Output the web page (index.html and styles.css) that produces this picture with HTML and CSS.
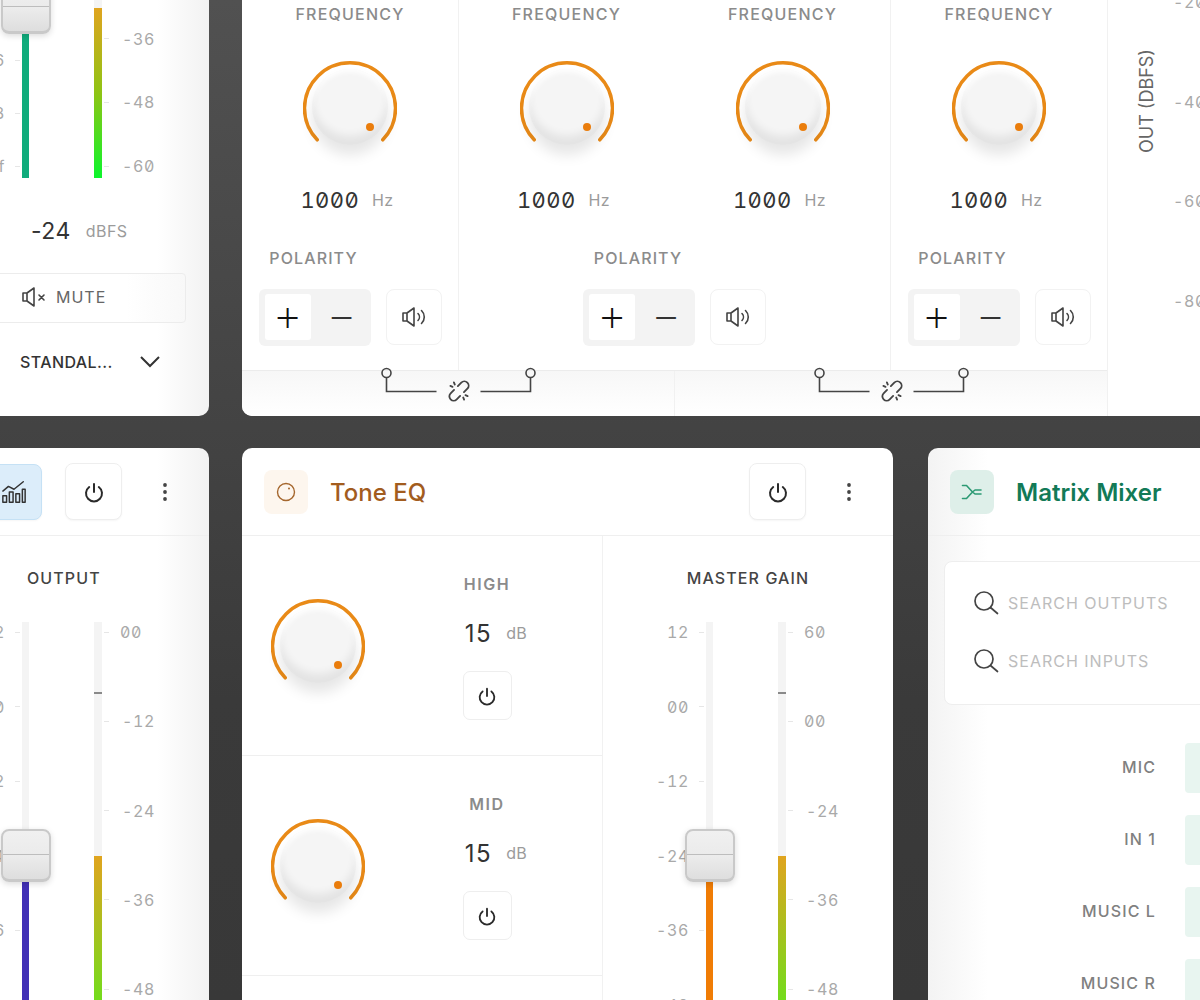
FILE: index.html
```html
<!DOCTYPE html>
<html>
  <head>
    <meta charset="utf-8">
    <title>Audio Processor</title>
    <link rel="stylesheet" href="styles.css">
  </head>
  <body>
    <svg class="sprites" width="0" height="0">
      <symbol id="i-power" viewBox="0 0 24 24"><path d="M12 4v8M7.2 7a8 8 0 1 0 9.6 0" fill="none" stroke="currentColor" stroke-width="2" stroke-linecap="round"/></symbol>
      <symbol id="i-dots" viewBox="0 0 24 24"><circle cx="12" cy="5" r="1.9" fill="currentColor"/><circle cx="12" cy="12" r="1.9" fill="currentColor"/><circle cx="12" cy="19" r="1.9" fill="currentColor"/></symbol>
      <symbol id="i-speaker" viewBox="0 0 26 24"><g fill="none" stroke="currentColor" stroke-width="1.6" stroke-linejoin="round" stroke-linecap="round"><path d="M2 8h4l7-5v18l-7-5H2zM6 8v8"/><path d="M17 8.5a5 5 0 0 1 0 7M20.5 5.5a9 9 0 0 1 0 13"/></g></symbol>
      <symbol id="i-mute" viewBox="0 0 26 24"><g fill="none" stroke="currentColor" stroke-width="1.6" stroke-linejoin="round" stroke-linecap="round"><path d="M2 8h4l7-5v18l-7-5H2zM6 8v8"/><path d="M18 10l5 5M23 10l-5 5"/></g></symbol>
      <symbol id="i-search" viewBox="0 0 26 26"><g fill="none" stroke="currentColor" stroke-width="1.7" stroke-linecap="round"><circle cx="11" cy="11" r="9"/><path d="M17.5 17.5l7 6"/></g></symbol>
      <symbol id="i-link" viewBox="0 0 26 26"><g transform="rotate(-45 13 13)" fill="none" stroke="currentColor" stroke-width="1.7" stroke-linecap="round" stroke-linejoin="round"><path d="M10.5 9H6a4 4 0 0 0 0 8h4.5"/><path d="M15.5 9H20a4 4 0 0 1 0 8h-4.5"/><path d="M11.5 6l-.8-2M14.5 6l.8-2M11.5 20l-.8 2M14.500 20l.8 2"/></g></symbol>
      <symbol id="i-connector" viewBox="0 0 155 30"><g fill="none" stroke="currentColor" stroke-width="1.6"><circle cx="5.5" cy="6" r="4.5"/><path d="M5.5 10.5v14h50M99.5 24.5h50v-14"/><circle cx="149.5" cy="6" r="4.5"/></g></symbol>
      <symbol id="i-knob-arc" viewBox="0 0 94 94"><path d="M14.2 79.8a45.5 45.5 0 1 1 65.6 0" fill="none" stroke="#e98a17" stroke-width="3.5" stroke-linecap="round"/></symbol>
      <symbol id="i-chart" viewBox="0 0 28 28"><g fill="none" stroke="currentColor" stroke-width="1.6" stroke-linejoin="round" stroke-linecap="round"><path d="M2 13l6-5 6 3 10-8"/><rect x="2" y="18" width="4" height="7"/><rect x="9" y="14" width="4" height="11"/><rect x="16" y="16" width="4" height="9"/><rect x="23" y="11" width="3" height="14"/></g></symbol>
    </svg>

    <div class="stage">
      <div class="row row-top">
        <section class="card card-side">
          <div class="fader-row fader-row-short">
            <div class="scale scale-left">
              <div class="scale-item"><span>-36</span><i></i></div>
              <div class="scale-item"><span>-48</span><i></i></div>
              <div class="scale-item"><span>-Inf</span><i></i></div>
            </div>
            <div class="track">
              <div class="fill fill-teal" style="height:144px"></div>
              <div class="fader-knob" style="bottom:144px"></div>
            </div>
            <div class="track track-meter">
              <div class="fill fill-meter-full" style="height:170px"></div>
            </div>
            <div class="scale scale-right">
              <div class="scale-item"><i></i><span>-36</span></div>
              <div class="scale-item"><i></i><span>-48</span></div>
              <div class="scale-item"><i></i><span>-60</span></div>
            </div>
          </div>
          <div class="readout"><span class="readout-num">-24</span><span class="unit">dBFS</span></div>
          <button class="mute"><svg class="icon-mute"><use href="#i-mute"/></svg>MUTE</button>
          <div class="select">
            <span>STANDAL...</span>
            <svg class="chevron" viewBox="0 0 22 14"><path d="M2 2l9 9 9-9" fill="none" stroke="currentColor" stroke-width="2"/></svg>
          </div>
        </section>

        <section class="card card-main">
          <div class="eq-area">
            <div class="eq-sections">
              <div class="eq-section">
                <div class="freqs">
                  <div class="freq">
                    <div class="label">FREQUENCY</div>
                    <div class="knob"><svg class="knob-arc"><use href="#i-knob-arc"/></svg><div class="knob-face"></div><div class="knob-dot"></div></div>
                    <div class="value"><span class="value-num">1000</span><span class="unit">Hz</span></div>
                  </div>
                </div>
                <div class="polarity-label">POLARITY</div>
                <div class="polarity">
                  <div class="segment"><button class="seg-btn seg-on">+</button><button class="seg-btn">&minus;</button></div>
                  <button class="icon-btn"><svg class="icon-speaker"><use href="#i-speaker"/></svg></button>
                </div>
              </div>
              <div class="eq-section eq-section-wide">
                <div class="freqs">
                  <div class="freq">
                    <div class="label">FREQUENCY</div>
                    <div class="knob"><svg class="knob-arc"><use href="#i-knob-arc"/></svg><div class="knob-face"></div><div class="knob-dot"></div></div>
                    <div class="value"><span class="value-num">1000</span><span class="unit">Hz</span></div>
                  </div>
                  <div class="freq">
                    <div class="label">FREQUENCY</div>
                    <div class="knob"><svg class="knob-arc"><use href="#i-knob-arc"/></svg><div class="knob-face"></div><div class="knob-dot"></div></div>
                    <div class="value"><span class="value-num">1000</span><span class="unit">Hz</span></div>
                  </div>
                </div>
                <div class="polarity-label">POLARITY</div>
                <div class="polarity">
                  <div class="segment"><button class="seg-btn seg-on">+</button><button class="seg-btn">&minus;</button></div>
                  <button class="icon-btn"><svg class="icon-speaker"><use href="#i-speaker"/></svg></button>
                </div>
              </div>
              <div class="eq-section eq-section-last">
                <div class="freqs">
                  <div class="freq">
                    <div class="label">FREQUENCY</div>
                    <div class="knob"><svg class="knob-arc"><use href="#i-knob-arc"/></svg><div class="knob-face"></div><div class="knob-dot"></div></div>
                    <div class="value"><span class="value-num">1000</span><span class="unit">Hz</span></div>
                  </div>
                </div>
                <div class="polarity-label">POLARITY</div>
                <div class="polarity">
                  <div class="segment"><button class="seg-btn seg-on">+</button><button class="seg-btn">&minus;</button></div>
                  <button class="icon-btn"><svg class="icon-speaker"><use href="#i-speaker"/></svg></button>
                </div>
              </div>
            </div>
            <div class="link-strip">
              <div class="link-cell"><svg class="connector"><use href="#i-connector"/></svg><svg class="icon-link"><use href="#i-link"/></svg></div>
              <div class="link-cell"><svg class="connector"><use href="#i-connector"/></svg><svg class="icon-link"><use href="#i-link"/></svg></div>
            </div>
          </div>
          <div class="out-axis">
            <div class="out-title">OUT (DBFS)</div>
            <div class="out-scale">
              <span>-20</span>
              <span>-40</span>
              <span>-60</span>
              <span>-80</span>
            </div>
          </div>
        </section>
      </div>

      <div class="row row-bottom">
        <section class="card card-side">
          <header class="card-head">
            <div class="head-actions">
              <button class="head-btn head-btn-active"><svg class="icon-chart"><use href="#i-chart"/></svg></button>
              <button class="head-btn"><svg class="icon-power"><use href="#i-power"/></svg></button>
              <svg class="icon-dots"><use href="#i-dots"/></svg>
            </div>
          </header>
          <div class="section-title section-title-output">OUTPUT</div>
          <div class="fader-row">
            <div class="scale scale-left scale-wide">
              <div class="scale-item"><span>12</span><i></i></div>
              <div class="scale-item"><span>00</span><i></i></div>
              <div class="scale-item"><span>-12</span><i></i></div>
              <div class="scale-item"><span>-24</span><i></i></div>
              <div class="scale-item"><span>-36</span><i></i></div>
            </div>
            <div class="track">
              <div class="fill fill-indigo" style="height:140px"></div>
              <div class="fader-knob" style="bottom:140px"></div>
            </div>
            <div class="track track-meter">
              <div class="peak"></div>
              <div class="fill fill-meter" style="height:166px"></div>
            </div>
            <div class="scale scale-right scale-wide">
              <div class="scale-item"><i></i><span class="pos">00</span></div>
              <div class="scale-item"><i></i><span>-12</span></div>
              <div class="scale-item"><i></i><span>-24</span></div>
              <div class="scale-item"><i></i><span>-36</span></div>
              <div class="scale-item"><i></i><span>-48</span></div>
            </div>
          </div>
        </section>

        <section class="card card-tone">
          <header class="card-head">
            <div class="badge badge-tone">
              <svg class="icon-dial" viewBox="0 0 20 20"><circle cx="10" cy="10" r="8.5" fill="none" stroke="currentColor" stroke-width="1.4"/><circle cx="13" cy="6.5" r="1" fill="currentColor"/></svg>
            </div>
            <h2 class="card-title title-tone">Tone EQ</h2>
            <div class="head-actions">
              <button class="head-btn"><svg class="icon-power"><use href="#i-power"/></svg></button>
              <svg class="icon-dots"><use href="#i-dots"/></svg>
            </div>
          </header>
          <div class="tone-body">
            <div class="bands">
              <div class="band">
                <div class="knob"><svg class="knob-arc"><use href="#i-knob-arc"/></svg><div class="knob-face"></div><div class="knob-dot"></div></div>
                <div class="band-info">
                  <div class="label label-dark">HIGH</div>
                  <div class="band-value"><span class="band-num">15</span><span class="unit">dB</span></div>
                  <button class="power-small"><svg class="icon-power-small"><use href="#i-power"/></svg></button>
                </div>
              </div>
              <div class="band">
                <div class="knob"><svg class="knob-arc"><use href="#i-knob-arc"/></svg><div class="knob-face"></div><div class="knob-dot"></div></div>
                <div class="band-info">
                  <div class="label label-dark">MID</div>
                  <div class="band-value"><span class="band-num">15</span><span class="unit">dB</span></div>
                  <button class="power-small"><svg class="icon-power-small"><use href="#i-power"/></svg></button>
                </div>
              </div>
            </div>
            <div class="master">
              <div class="section-title">MASTER GAIN</div>
              <div class="fader-row fader-row-master">
                <div class="scale scale-left scale-wide">
                  <div class="scale-item"><span>12</span><i></i></div>
                  <div class="scale-item"><span>00</span><i></i></div>
                  <div class="scale-item"><span>-12</span><i></i></div>
                  <div class="scale-item"><span>-24</span><i></i></div>
                  <div class="scale-item"><span>-36</span><i></i></div>
                  <div class="scale-item"><span>-48</span><i></i></div>
                </div>
                <div class="track">
                  <div class="fill fill-orange" style="height:140px"></div>
                  <div class="fader-knob" style="bottom:140px"></div>
                </div>
                <div class="track track-meter">
                  <div class="peak"></div>
                  <div class="fill fill-meter" style="height:166px"></div>
                </div>
                <div class="scale scale-right scale-wide">
                  <div class="scale-item"><i></i><span class="pos">60</span></div>
                  <div class="scale-item"><i></i><span class="pos">00</span></div>
                  <div class="scale-item"><i></i><span>-24</span></div>
                  <div class="scale-item"><i></i><span>-36</span></div>
                  <div class="scale-item"><i></i><span>-48</span></div>
                </div>
              </div>
            </div>
          </div>
        </section>

        <section class="card card-matrix">
          <header class="card-head">
            <div class="badge badge-matrix">
              <svg class="icon-merge" viewBox="0 0 22 16"><path d="M1.500 1.500h4l6 6.500-6 6.500h-4M11.500 8l2.500-2h6M11.500 8l2.500 2h6" fill="none" stroke="currentColor" stroke-width="1.600" stroke-linejoin="round" stroke-linecap="round"/></svg>
            </div>
            <h2 class="card-title title-matrix">Matrix Mixer</h2>
          </header>
          <div class="search-box">
            <div class="search-row"><svg class="icon-search"><use href="#i-search"/></svg><span>SEARCH OUTPUTS</span></div>
            <div class="search-row"><svg class="icon-search"><use href="#i-search"/></svg><span>SEARCH INPUTS</span></div>
          </div>
          <div class="matrix-rows">
            <div class="matrix-row"><div class="matrix-label">MIC</div><div class="matrix-cell"></div></div>
            <div class="matrix-row"><div class="matrix-label">IN 1</div><div class="matrix-cell"></div></div>
            <div class="matrix-row"><div class="matrix-label">MUSIC L</div><div class="matrix-cell"></div></div>
            <div class="matrix-row"><div class="matrix-label">MUSIC R</div><div class="matrix-cell"></div></div>
          </div>
        </section>
      </div>
    </div>
  </body>
</html>
```

FILE: styles.css
```css
* {
  box-sizing: border-box;
}
html, body {
  margin: 0;
  padding: 0;
}
body {
  font-family: Inter, "Liberation Sans", sans-serif;
  color: #333333;
  overflow: hidden;
}
button {
  font-family: inherit;
  padding: 0;
  cursor: pointer;
}
.sprites {
  position: absolute;
}
.stage {
  width: 1200px;
  height: 1000px;
  overflow: hidden;
  display: flex;
  flex-direction: column;
  gap: 32px;
  background: linear-gradient(to bottom, #515151, #3a3a3a 70%, #383838);
}
.row {
  display: flex;
}
.row-top {
  height: 416px;
  flex: none;
  gap: 33px;
}
.row-bottom {
  height: 552px;
  flex: none;
}
.card {
  background-color: #ffffff;
  border-radius: 10px;
  overflow: hidden;
  flex: none;
}
.card-side {
  width: 209px;
  border-radius: 0 10px 10px 0;
  background: linear-gradient(to right, #ffffff 75%, #f2f2f2);
}
.row-top .card-side,
.row-top .card-main {
  border-top-left-radius: 0;
  border-top-right-radius: 0;
}
.card-main {
  width: 958px;
  border-radius: 10px 0 0 10px;
  display: flex;
}
.row-bottom .card-side {
  border-bottom-right-radius: 0;
}
.card-tone {
  width: 651px;
  margin-left: 33px;
  border-radius: 10px 10px 0 0;
}
.card-matrix {
  width: 272px;
  margin-left: 35px;
  border-radius: 10px 0 0 0;
  background: linear-gradient(to right, #f3f3f3, #ffffff 22%);
}

/* Faders and meters */
.fader-row {
  display: flex;
  height: 400px;
  margin-left: -40px;
}
.fader-row-short {
  height: 178px;
}
.fader-row-master {
  margin-left: 41px;
  margin-top: 34px;
}
.scale {
  display: flex;
  flex-direction: column;
  color: #a9a9a9;
  font-size: 16px;
  letter-spacing: 0.6px;
  font-variant-numeric: tabular-nums slashed-zero;
}
.scale-left {
  width: 60px;
  margin-right: 2px;
  justify-content: flex-end;
  gap: 33px;
  padding-bottom: 2px;
}
.scale-right {
  margin-left: 2px;
  justify-content: flex-end;
  gap: 43.6px;
  padding-bottom: 2px;
}
.scale-wide {
  justify-content: flex-start;
  padding-bottom: 0;
}
.scale-left.scale-wide {
  gap: 54.5px;
}
.scale-right.scale-wide {
  gap: 69.3px;
}
.scale-item {
  height: 20px;
  display: flex;
  align-items: center;
  justify-content: flex-end;
  white-space: nowrap;
}
.scale-right .scale-item {
  justify-content: flex-start;
}
.scale-item i {
  display: block;
  width: 5px;
  height: 1px;
  background-color: #e6e6e6;
}
.scale-left span {
  margin-right: 10px;
}
.scale-right span {
  margin-left: 13px;
}
.scale-right span.pos {
  margin-left: 11px;
}
.track {
  position: relative;
  width: 7px;
  background-color: #f4f4f4;
  display: flex;
  flex-direction: column;
  justify-content: flex-end;
}
.track-meter {
  width: 8px;
  margin-left: 65px;
}
.fill {
  width: 100%;
}
.fill-teal {
  background-color: #10ac7c;
}
.fill-indigo {
  background-color: #4130b6;
}
.fill-orange {
  background-color: #f07c05;
}
.fill-meter-full {
  background: linear-gradient(to bottom, #e0a41f, #8fc414 50%, #0cf52c);
}
.fill-meter {
  background: linear-gradient(to bottom, #e0a41f, #6fde1c 90%);
}
.peak {
  position: absolute;
  top: 70px;
  left: 0;
  width: 100%;
  height: 2px;
  background-color: #8a8a8a;
}
.fader-knob {
  position: absolute;
  left: -21px;
  width: 50px;
  height: 53px;
  border-radius: 8px;
  border: 2px solid #c9c9c9;
  border-bottom-width: 3px;
  background: linear-gradient(to bottom, #f0f0f0 0, #ebebeb 48%, #bdbdbd 48%, #bdbdbd 51%, #ececec 51%, #dedede 100%);
  box-shadow: 0 2px 6px rgba(0, 0, 0, 0.14);
}

/* Top left card */
.readout {
  display: flex;
  align-items: center;
  margin-top: 40px;
  padding-left: 31px;
  height: 26px;
}
.readout-num {
  font-size: 23px;
  letter-spacing: 0.5px;
  color: #333333;
  margin-right: 15px;
}
.unit {
  font-size: 16px;
  color: #9b9b9b;
  letter-spacing: 0.4px;
}
.mute {
  display: flex;
  align-items: center;
  width: 196px;
  height: 50px;
  margin-top: 29px;
  margin-left: -10px;
  padding: 0 0 3px 30px;
  background: linear-gradient(to right, #ffffff 70%, #f8f8f8);
  border: 1px solid #ececec;
  border-radius: 4px;
  color: #666666;
  font-size: 16px;
  letter-spacing: 1px;
}
.icon-mute {
  width: 26px;
  height: 24px;
  margin-right: 9px;
  color: #444444;
}
.select {
  display: flex;
  align-items: center;
  margin-top: 29px;
  padding-left: 20px;
  font-size: 16px;
  font-weight: 500;
  letter-spacing: 0.4px;
  color: #333333;
}
.chevron {
  width: 22px;
  height: 14px;
  margin-left: 26px;
}

/* Top main card */
.eq-area {
  width: 866px;
  flex: none;
  display: flex;
  flex-direction: column;
  border-right: 1px solid #f1f1f1;
}
.eq-sections {
  display: flex;
  height: 371px;
  border-bottom: 1px solid #ececec;
}
.eq-section {
  width: 217px;
  padding-top: 4px;
  border-right: 1px solid #f1f1f1;
  display: flex;
  flex-direction: column;
  align-items: center;
}
.eq-section-wide {
  width: 432px;
}
.eq-section-last {
  border-right: none;
}
.freqs {
  display: flex;
}
.freq {
  width: 216px;
  display: flex;
  flex-direction: column;
  align-items: center;
}
.label {
  font-size: 16px;
  line-height: 20px;
  font-weight: 500;
  letter-spacing: 1.2px;
  color: #8b8b8b;
}
.label-dark {
  font-weight: 600;
  letter-spacing: 1.6px;
}
.knob {
  position: relative;
  width: 94px;
  height: 94px;
  flex: none;
}
.freq .knob {
  margin-top: 36px;
}
.knob-arc {
  width: 94px;
  height: 94px;
  display: block;
}
.knob-face {
  position: absolute;
  left: 9px;
  top: 9px;
  width: 76px;
  height: 76px;
  border-radius: 50%;
  background: #f5f5f5;
  box-shadow: 0 10px 14px rgba(0, 0, 0, 0.1), inset 0 -9px 9px rgba(0, 0, 0, 0.07), inset 0 3px 5px rgba(255, 255, 255, 0.9);
}
.knob-dot {
  position: absolute;
  left: 63px;
  top: 63px;
  width: 8px;
  height: 8px;
  border-radius: 50%;
  background-color: #ea7d0c;
}
.value {
  display: flex;
  align-items: center;
  margin-top: 33px;
  padding-right: 6px;
  height: 26px;
}
.value-num {
  font-size: 22px;
  color: #333333;
  letter-spacing: 0.4px;
  margin-right: 13px;
  font-variant-numeric: tabular-nums slashed-zero;
}
.polarity-label {
  width: 183px;
  margin-top: 35px;
  padding-right: 73px;
  text-align: center;
  font-size: 16px;
  line-height: 20px;
  font-weight: 500;
  letter-spacing: 1.1px;
  color: #8b8b8b;
}
.polarity {
  display: flex;
  align-items: flex-start;
  gap: 15px;
  margin-top: 21px;
}
.segment {
  display: flex;
  width: 112px;
  height: 57px;
  padding: 5px 6px;
  gap: 8px;
  background-color: #f3f3f3;
  border-radius: 6px;
}
.seg-btn {
  width: 46px;
  height: 46px;
  flex: none;
  padding-bottom: 6px;
  border: none;
  background: none;
  font-size: 46px;
  font-weight: 200;
  line-height: 40px;
  color: #333333;
  border-radius: 3px;
}
.seg-on {
  background-color: #ffffff;
  color: #111111;
}
.icon-btn {
  width: 56px;
  height: 56px;
  background-color: #ffffff;
  border: 1px solid #f2f2f2;
  border-radius: 8px;
  display: flex;
  align-items: center;
  justify-content: center;
  color: #444444;
}
.icon-speaker {
  width: 26px;
  height: 24px;
}
.link-strip {
  display: flex;
  height: 45px;
  background: linear-gradient(to bottom, #f7f7f7, #ffffff);
}
.link-cell {
  position: relative;
  width: 50%;
  display: flex;
  justify-content: center;
  border-right: 1px solid #f1f1f1;
  color: #444444;
}
.link-cell:last-child {
  border-right: none;
}
.connector {
  width: 155px;
  height: 30px;
  margin-top: -4px;
  margin-left: 2px;
}
.icon-link {
  position: absolute;
  left: 50%;
  top: 6px;
  width: 28px;
  height: 28px;
  margin-left: -13px;
}
.out-axis {
  display: flex;
  padding-left: 29px;
}
.out-title {
  writing-mode: vertical-rl;
  transform: rotate(180deg);
  height: 106px;
  width: 20px;
  margin-top: 47px;
  font-size: 18px;
  line-height: 20px;
  color: #666666;
  white-space: nowrap;
}
.out-scale {
  display: flex;
  flex-direction: column;
  gap: 79.6px;
  margin-top: -8px;
  margin-left: 16px;
  color: #a9a9a9;
  font-size: 16px;
  letter-spacing: 0.6px;
  font-variant-numeric: tabular-nums slashed-zero;
}
.out-scale span {
  display: block;
  height: 20px;
  line-height: 20px;
}

/* Bottom cards */
.card-head {
  height: 88px;
  display: flex;
  align-items: center;
  padding-left: 22px;
  border-bottom: 1px solid #efefef;
}
.card-side .card-head {
  padding-left: 0;
  justify-content: flex-end;
}
.head-actions {
  margin-left: auto;
  padding-right: 32px;
  display: flex;
  flex: none;
  align-items: center;
  color: #333333;
}
.card-side .head-actions {
  margin-left: 0;
}
.head-btn {
  width: 57px;
  height: 57px;
  flex: none;
  background-color: #ffffff;
  border: 1px solid #eeeeee;
  border-radius: 8px;
  display: flex;
  align-items: center;
  justify-content: center;
  color: #2a2a2a;
  box-shadow: 0 1px 2px rgba(0, 0, 0, 0.04);
}
.head-btn-active {
  width: 52px;
  height: 56px;
  margin-right: 23px;
  padding-right: 4px;
  background-color: #dcedfa;
  border-color: #c5e1f5;
  color: #333333;
}
.icon-power {
  width: 24px;
  height: 24px;
}
.icon-dots {
  width: 24px;
  height: 24px;
  margin-left: 31px;
  color: #444444;
}
.icon-chart {
  width: 26px;
  height: 26px;
}
.badge {
  width: 44px;
  height: 44px;
  flex: none;
  border-radius: 8px;
  display: flex;
  align-items: center;
  justify-content: center;
}
.badge-tone {
  background-color: #fdf6ee;
  color: #a5672e;
}
.icon-dial {
  width: 20px;
  height: 20px;
}
.badge-matrix {
  background-color: #deefe9;
  color: #2c9a74;
}
.icon-merge {
  width: 22px;
  height: 16px;
}
.card-title {
  margin: 2px 0 0 22px;
  font-size: 24px;
  font-weight: 500;
}
.title-tone {
  color: #a25c1e;
}
.title-matrix {
  color: #127a57;
  font-weight: 600;
}
.section-title {
  font-size: 16px;
  line-height: 20px;
  font-weight: 500;
  letter-spacing: 1.1px;
  color: #444444;
  text-align: center;
}
.section-title-output {
  margin-top: 32px;
  margin-bottom: 34px;
  margin-left: 27px;
  text-align: left;
}
.tone-body {
  display: flex;
  height: 464px;
}
.bands {
  width: 361px;
  flex: none;
  border-right: 1px solid #f1f1f1;
}
.band {
  height: 220px;
  display: flex;
  padding: 38px 0 0 29px;
  border-bottom: 1px solid #efefef;
}
.band .knob {
  margin-top: 24px;
}
.band-info {
  width: 96px;
  margin-left: 74px;
  display: flex;
  flex-direction: column;
  align-items: center;
}
.band-value {
  display: flex;
  align-items: center;
  height: 26px;
  margin-top: 26px;
  margin-left: 18px;
  white-space: nowrap;
}
.band-num {
  font-size: 24px;
  letter-spacing: 1.5px;
  margin-right: 14px;
  color: #333333;
}
.power-small {
  width: 49px;
  height: 49px;
  flex: none;
  margin-top: 25px;
  background-color: #ffffff;
  border: 1px solid #eeeeee;
  border-radius: 7px;
  display: flex;
  align-items: center;
  justify-content: center;
  color: #2a2a2a;
}
.icon-power-small {
  width: 22px;
  height: 22px;
}
.master {
  flex: 1;
  padding-top: 32px;
}
.search-box {
  width: 280px;
  height: 144px;
  margin: 25px 0 0 16px;
  padding: 21px 0 0 28px;
  display: flex;
  flex-direction: column;
  gap: 18px;
  background-color: #ffffff;
  border: 1px solid #eeeeee;
  border-radius: 8px;
}
.search-row {
  height: 40px;
  display: flex;
  align-items: center;
  gap: 9px;
  font-size: 16px;
  letter-spacing: 1px;
  color: #bdbdbd;
  white-space: nowrap;
}
.icon-search {
  width: 26px;
  height: 26px;
  flex: none;
  color: #444444;
}
.matrix-rows {
  margin-top: 38px;
  display: flex;
  flex-direction: column;
  gap: 22px;
}
.matrix-row {
  display: flex;
  align-items: center;
  height: 50px;
}
.matrix-label {
  width: 228px;
  padding-bottom: 2px;
  text-align: right;
  font-size: 16px;
  font-weight: 500;
  letter-spacing: 1.1px;
  color: #808080;
}
.matrix-cell {
  flex: 1;
  height: 50px;
  margin-left: 29px;
  background-color: #e8f5f0;
  border-radius: 4px 0 0 4px;
}
```
